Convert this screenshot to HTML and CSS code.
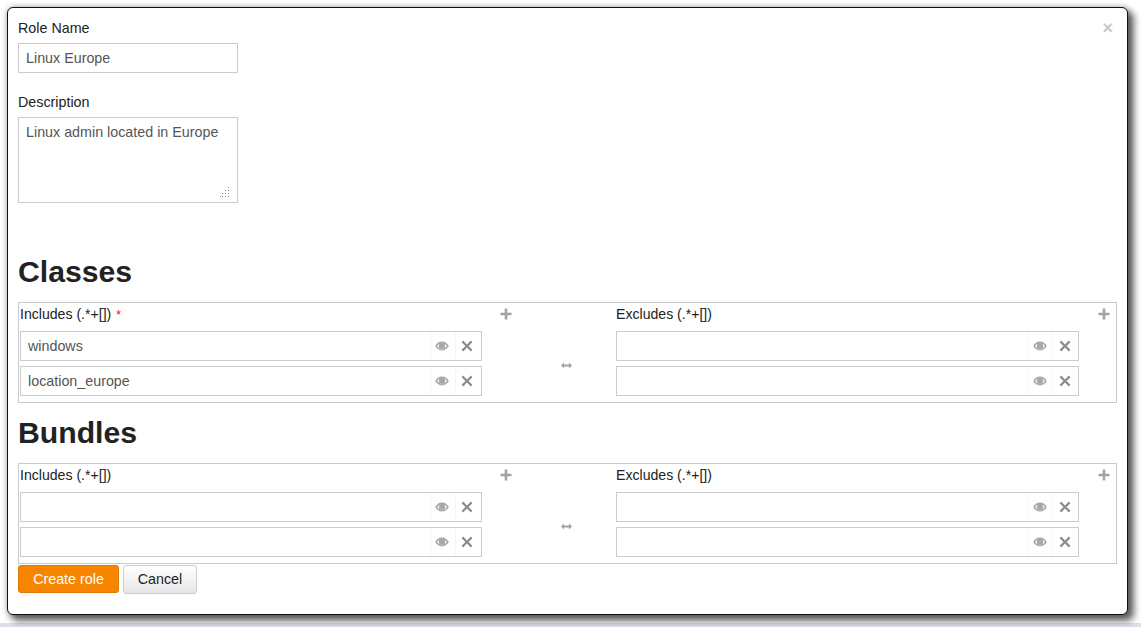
FILE: index.html
```html
<!DOCTYPE html>
<html lang="en">
<head>
  <meta charset="UTF-8" />
  <title>Create role</title>
  <link rel="stylesheet" href="styles.css">
</head>
<body>

  <svg class="icon-defs" width="0" height="0">
    <symbol id="i-eye" viewBox="0 0 14 10">
      <path fill-rule="evenodd" d="M7 .6C3.9.6 1.4 2.6.2 5c1.2 2.4 3.7 4.400 6.800 4.400s5.600-2 6.800-4.400C12.600 2.600 10.100.6 7 .6zM2.200 5c.7-1 1.600-1.900 2.700-2.500A3.200 3.200 0 0 0 3.800 5a3.200 3.200 0 0 0 6.400 0c0-1-.4-1.900-1.100-2.500 1.100.6 2 1.500 2.700 2.500-1.100 1.700-2.800 3-4.800 3s-3.700-1.300-4.800-3z"/>
    </symbol>
    <symbol id="i-x" viewBox="0 0 12 12">
      <path d="M2.200.6 6 4.400 9.800.6l1.600 1.600L7.600 6l3.800 3.800-1.600 1.600L6 7.600l-3.800 3.800-1.600-1.600L4.400 6 .6 2.200z"/>
    </symbol>
    <symbol id="i-plus" viewBox="0 0 12 12">
      <path d="M4.700.5h2.600v4.200h4.200v2.600H7.300v4.200H4.700V7.300H.5V4.700h4.200z"/>
    </symbol>
    <symbol id="i-arrows" viewBox="0 0 11 7">
      <path d="M3 .5v2h5v-2l3 3-3 3v-2H3v2l-3-3z"/>
    </symbol>
  </svg>

  <div class="modal">
    <button class="close" type="button">×</button>

    <form>
      <label class="lbl">Role Name</label>
      <input class="txt" type="text" value="Linux Europe">

      <label class="lbl lbl-desc">Description</label>
      <div class="area-wrap">
        <textarea class="txt area">Linux admin located in Europe</textarea>
        <svg class="grip" width="10" height="10" viewBox="0 0 10 10"><path d="M8 0h1v1H8zM8 3h1v1H8zM5 3h1v1H5zM8 6h1v1H8zM5 6h1v1H5zM2 6h1v1H2zM8 9h1v1H8zM5 9h1v1H5zM2 9h1v1H2zM0 9h1v1H0z"/></svg>
      </div>

      <h1 class="classes-title">Classes</h1>
      <div class="rule-box">
        <div class="rule-label">Includes (.*+[]) <span class="req">*</span></div>
        <svg class="plus"><use href="#i-plus"/></svg>
        <div class="swap"><svg class="arrows"><use href="#i-arrows"/></svg></div>
        <div class="rule-label">Excludes (.*+[])</div>
        <svg class="plus plus-r"><use href="#i-plus"/></svg>

        <div class="field"><input type="text" value="windows"><span class="btn-eye"><svg><use href="#i-eye"/></svg></span><span class="btn-x"><svg><use href="#i-x"/></svg></span></div>
        <div></div>
        <div class="field field-r"><input type="text"><span class="btn-eye"><svg><use href="#i-eye"/></svg></span><span class="btn-x"><svg><use href="#i-x"/></svg></span></div>
        <div></div>

        <div class="field"><input type="text" value="location_europe"><span class="btn-eye"><svg><use href="#i-eye"/></svg></span><span class="btn-x"><svg><use href="#i-x"/></svg></span></div>
        <div></div>
        <div class="field field-r"><input type="text"><span class="btn-eye"><svg><use href="#i-eye"/></svg></span><span class="btn-x"><svg><use href="#i-x"/></svg></span></div>
        <div></div>
      </div>

      <h1 class="bundles-title">Bundles</h1>
      <div class="rule-box">
        <div class="rule-label">Includes (.*+[])</div>
        <svg class="plus"><use href="#i-plus"/></svg>
        <div class="swap"><svg class="arrows"><use href="#i-arrows"/></svg></div>
        <div class="rule-label">Excludes (.*+[])</div>
        <svg class="plus plus-r"><use href="#i-plus"/></svg>

        <div class="field"><input type="text"><span class="btn-eye"><svg><use href="#i-eye"/></svg></span><span class="btn-x"><svg><use href="#i-x"/></svg></span></div>
        <div></div>
        <div class="field field-r"><input type="text"><span class="btn-eye"><svg><use href="#i-eye"/></svg></span><span class="btn-x"><svg><use href="#i-x"/></svg></span></div>
        <div></div>

        <div class="field"><input type="text"><span class="btn-eye"><svg><use href="#i-eye"/></svg></span><span class="btn-x"><svg><use href="#i-x"/></svg></span></div>
        <div></div>
        <div class="field field-r"><input type="text"><span class="btn-eye"><svg><use href="#i-eye"/></svg></span><span class="btn-x"><svg><use href="#i-x"/></svg></span></div>
        <div></div>
      </div>

      <div class="actions">
        <button class="btn btn-create" type="button">Create role</button>
        <button class="btn btn-cancel" type="button">Cancel</button>
      </div>
    </form>
  </div>

</body>
</html>
```

FILE: styles.css
```css
html, body {
  height: 100%;
}

body {
  margin: 0;
  padding: 7px 13px 0 7px;
  box-sizing: border-box;
  height: 627px;
  overflow: hidden;
  background: linear-gradient(#fff 623px, #dde0ea 623px);
  font-family: "Liberation Sans", Arial, sans-serif;
  font-size: 14.3px;
  color: #222;
}

.icon-defs {
  position: absolute;
}

.modal {
  position: relative;
  box-sizing: border-box;
  height: 608px;
  padding: 12px 10px 0;
  background: #fff;
  border: 1px solid #111;
  border-radius: 6px;
  box-shadow: 5px 5px 7px 1px rgba(0,0,0,0.6), 0 0 6px rgba(0,0,0,0.3);
}

.close {
  position: absolute;
  top: 10px;
  right: 14px;
  padding: 0;
  border: none;
  background: none;
  color: #c8c8c8;
  font-family: "Liberation Sans", sans-serif;
  font-size: 18px;
  font-weight: bold;
  line-height: 20px;
}

.lbl {
  display: block;
  height: 16px;
  line-height: 16px;
  margin-bottom: 7px;
}

.lbl-desc {
  margin-top: 21px;
}

.txt {
  display: block;
  box-sizing: border-box;
  width: 220px;
  height: 30px;
  padding: 0 7px;
  border: 1px solid #ccc;
  background: #fff;
  color: #555;
  font: 14.3px/20px "Liberation Sans", Arial, sans-serif;
  outline: none;
}

.area-wrap {
  position: relative;
  width: 220px;
}

.area {
  height: 86px;
  padding: 4px 7px;
  resize: none;
}

.grip {
  position: absolute;
  right: 8px;
  bottom: 6px;
  fill: #888;
}

h1 {
  margin: 0;
  font-size: 30.2px;
  font-weight: bold;
  line-height: 36px;
  color: #222;
}

.classes-title {
  margin-top: 51px;
  margin-bottom: 12px;
}

.bundles-title {
  margin-top: 12px;
  margin-bottom: 12px;
}

.rule-box {
  display: grid;
  grid-template-columns: 462px 48px 86px 463px 1fr;
  grid-template-rows: 23px 30px 30px;
  row-gap: 5px;
  box-sizing: border-box;
  height: 101px;
  padding: 0 1px;
  border: 1px solid #c5c9d3;
}

.rule-box > .rule-label:nth-child(4) {
  grid-column: 4;
}

.rule-label {
  font-size: 14.1px;
  line-height: 22px;
  color: #222;
}

.req {
  margin-left: 1px;
  color: #e00;
  font-size: 12px;
}

.plus {
  width: 12px;
  height: 12px;
  margin: 5px 0 0 18px;
  fill: #a3a3a3;
}

.plus-r {
  margin-left: 19px;
}

.swap {
  grid-column: 3;
  grid-row: 1 / span 3;
  display: flex;
  align-items: center;
  justify-content: center;
  padding: 31px 14px 0 0;
}

.arrows {
  width: 11px;
  height: 7px;
  fill: #a3a3a3;
}

.field {
  display: flex;
  box-sizing: border-box;
  padding-right: 1px;
  border: 1px solid #ccc;
  background: #fff;
  grid-column: 1;
}

.field-r {
  grid-column: 4;
}

.field input {
  flex: 1;
  min-width: 0;
  padding: 0 7px;
  border: none;
  outline: none;
  background: none;
  color: #555;
  font: 14.3px "Liberation Sans", Arial, sans-serif;
}

.btn-eye, .btn-x {
  display: flex;
  align-items: center;
  justify-content: center;
  box-sizing: border-box;
  width: 25px;
  border-left: 1px solid #f6f6f6;
}

.field:not(.field-r) .btn-eye {
  padding-right: 2px;
}

.field:not(.field-r) .btn-x {
  padding-right: 2px;
}

.btn-eye svg {
  width: 14px;
  height: 10px;
  fill: #a8a8a8;
}

.btn-x svg {
  width: 12px;
  height: 12px;
  fill: #8c8c8c;
}

.actions {
  display: flex;
  align-items: flex-start;
  gap: 4px;
  margin-top: 1px;
}

.btn {
  box-sizing: border-box;
  font: 14.3px "Liberation Sans", Arial, sans-serif;
  border-radius: 3px;
  padding: 0;
}

.btn-create {
  width: 101px;
  height: 28px;
  background: #f78500;
  border: 1px solid #dd7a08;
  color: #fff;
}

.btn-cancel {
  width: 74px;
  height: 29px;
  padding-bottom: 2px;
  background: linear-gradient(#fff, #e6e6e6);
  border: 1px solid #ccc;
  color: #222;
}
```
